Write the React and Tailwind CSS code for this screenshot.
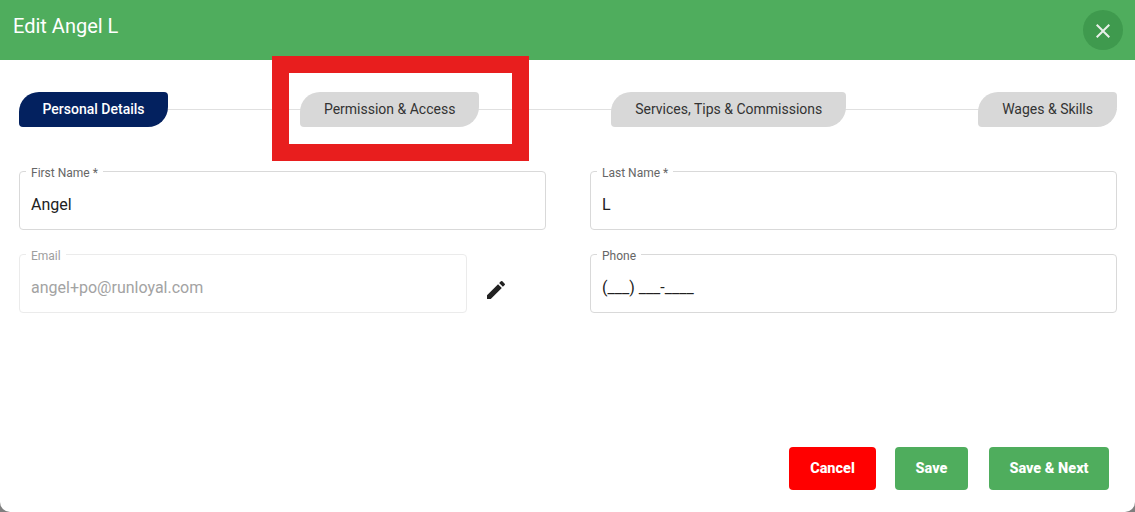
function Step({ label, active }) {
  return (
    <div
      className={`relative h-[35px] px-6 pb-[1px] flex items-center rounded-tl-[20px] rounded-br-[20px] rounded-tr-[4px] rounded-bl-[4px] text-sm whitespace-nowrap ${
        active ? "bg-[#03215f] text-white font-medium !px-[23.5px]" : "bg-[#d8d8d8] text-[#333333]"
      }`}
    >
      {label}
    </div>
  );
}

function Field({ label, value, disabled }) {
  return (
    <div
      className={`relative h-[59px] flex-1 border rounded px-[11px] pt-[9px] flex items-center ${
        disabled ? "border-[#ebebeb]" : "border-[#d9d9d9]"
      }`}
    >
      <span
        className={`absolute left-[6px] top-[-6px] bg-white px-[5px] text-xs leading-[14px] ${
          disabled ? "text-[#9e9e9e]" : "text-[#666666]"
        }`}
      >
        {label}
      </span>
      <span className={`text-base leading-[24px] ${disabled ? "text-[#a3a3a3]" : "text-[#212121]"}`}>
        {value}
      </span>
    </div>
  );
}

export default function App() {
  return (
    <div className="relative w-[1135px] h-[512px] overflow-hidden bg-[#7f7f7f] font-['Roboto',sans-serif]">
      <div className="h-full bg-white rounded-b-[10px] flex flex-col">
        <div className="h-[60px] shrink-0 bg-[#4fad5d] flex items-start justify-between pl-[13px] pr-[12px]">
          <h1 className="text-xl font-normal text-white leading-[26px] mt-[13px]">Edit Angel L</h1>
          <button className="w-10 h-10 mt-[10px] pt-[2px] rounded-full bg-[#3f9a4e] flex items-center justify-center">
            <svg width="24" height="24" viewBox="0 0 24 24" fill="#e9f0ea">
              <path d="M19 6.41 17.59 5 12 10.59 6.41 5 5 6.41 10.59 12 5 17.59 6.41 19 12 13.41 17.59 19 19 17.59 13.41 12z" />
            </svg>
          </button>
        </div>

        <div className="flex-1 flex flex-col pl-[19px] pr-[18px]">
          <div className="relative mt-[32px] flex justify-between">
            <div className="absolute left-0 right-0 top-[17px] h-px bg-[#e0e0e0]" />
            <Step label="Personal Details" active />
            <Step label="Permission & Access" />
            <Step label="Services, Tips & Commissions" />
            <Step label="Wages & Skills" />
          </div>

          <div className="mt-[44px] grid grid-cols-[527px_527px] justify-between gap-y-[24px]">
            <Field label="First Name *" value="Angel" />
            <Field label="Last Name *" value="L" />
            <div className="flex items-start">
              <Field label="Email" value="angel+po@runloyal.com" disabled />
              <div className="w-[24px] ml-[17px] mr-[38px] mt-[24px]">
                <svg width="24" height="24" viewBox="0 0 24 24" fill="#212121">
                  <path d="M3 17.25V21h3.75L17.81 9.94l-3.75-3.75L3 17.25zM20.71 7.04a.996.996 0 0 0 0-1.41l-2.34-2.34a.996.996 0 0 0-1.41 0l-1.83 1.83 3.75 3.75 1.83-1.83z" />
                </svg>
              </div>
            </div>
            <Field label="Phone" value="(___) ___-____" />
          </div>

          <div className="mt-auto mb-[22px] flex justify-end gap-[19px] pr-[8px]">
            <button className="h-[43px] w-[87px] rounded bg-[#ff0000] text-white text-[14.5px] font-extrabold">Cancel</button>
            <button className="h-[43px] w-[73px] rounded bg-[#4fad5d] text-white text-[14.5px] font-extrabold">Save</button>
            <button className="h-[43px] w-[120px] ml-[2px] rounded bg-[#4fad5d] text-white text-[14.5px] font-extrabold">Save &amp; Next</button>
          </div>
        </div>
      </div>

      {/* annotation box drawn over the screenshot */}
      <div className="absolute left-[272px] top-[56px] w-[257px] h-[105px] border-[17px] border-[#e81e1e]" />
    </div>
  );
}
